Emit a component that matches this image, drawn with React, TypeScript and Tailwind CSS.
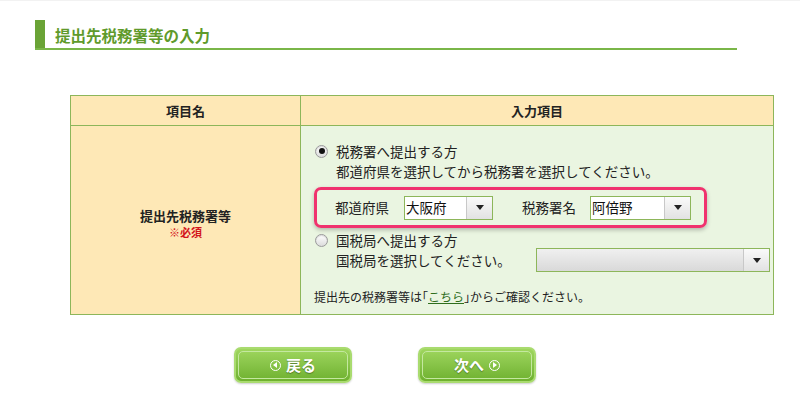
import React from "react";

const jp = { fontFamily: '"Noto Sans CJK JP", "Noto Sans", sans-serif' };

function Radio({ checked }: { checked?: boolean }) {
  return (
    <span className="inline-flex h-[13px] w-[13px] items-center justify-center rounded-full border border-[#9a9a9a] bg-gradient-to-b from-white to-[#dcdcdc] shadow-[inset_0_1px_1px_rgba(0,0,0,0.15)]">
      {checked && <span className="h-[6px] w-[6px] rounded-full bg-[#111]" />}
    </span>
  );
}

function Select({ value, width, gray }: { value: string; width: string; gray?: boolean }) {
  return (
    <div
      className={`flex h-[24px] shrink-0 items-stretch border border-[#8db65a] ${width} ${
        gray ? "bg-gradient-to-b from-[#f0f0f0] to-[#d9d9d9]" : "bg-white"
      }`}
    >
      <span className="flex flex-1 items-center pl-[1px] text-[13.5px] leading-none text-[#111]">{value}</span>
      <span className="flex w-[26px] items-center justify-center border-l border-[#c8c8c8] bg-gradient-to-b from-[#fafafa] to-[#e2e2e2]">
        <span className="h-0 w-0 border-x-[4px] border-t-[5px] border-x-transparent border-t-[#222]" />
      </span>
    </div>
  );
}

function NavButton({ label, dir }: { label: string; dir: "back" | "next" }) {
  const icon = (
    <span className="inline-flex h-[11px] w-[11px] items-center justify-center rounded-full border-[1.5px] border-white">
      <span
        className={`h-0 w-0 border-y-[3px] border-y-transparent ${
          dir === "back" ? "mr-[1px] border-r-[4px] border-r-white" : "ml-[1px] border-l-[4px] border-l-white"
        }`}
      />
    </span>
  );
  return (
    <button className="h-[36px] w-[118px] rounded-[7px] border-2 border-[#a9db6f] bg-gradient-to-b from-[#9fd65e] to-[#6fb12f] p-[2px] shadow-[0_1px_2px_rgba(0,0,0,0.2)]">
      <div className="flex h-full w-full items-center justify-center gap-[5px] rounded-[5px] border border-[#c4e8a0] text-[15px] font-bold text-white [text-shadow:0_1px_1px_rgba(0,0,0,0.35)]">
        {dir === "back" && icon}
        <span>{label}</span>
        {dir === "next" && icon}
      </div>
    </button>
  );
}

export default function App() {
  return (
    <div className="h-[395px] w-[800px] overflow-hidden border-t border-[#f2f2f2] bg-white text-[#222]" style={jp}>
      {/* Heading */}
      <div className="ml-[35px] mt-[19px] flex w-[702px] items-stretch border-b-2 border-[#7ab648]">
        <div className="w-[10px] bg-[#6aa336]" />
        <h2 className="flex h-[28px] items-center pl-[10px] pt-[4px] text-[15.5px] font-bold text-[#5f9a2b]">
          提出先税務署等の入力
        </h2>
      </div>

      {/* Table */}
      <table className="ml-[70px] mt-[45px] w-[704px] table-fixed border-collapse text-[13.5px]">
        <colgroup>
          <col className="w-[230px]" />
          <col />
        </colgroup>
        <thead>
          <tr className="h-[30px] bg-[#fee8b6]">
            <th className="border border-[#8db65a] text-[13px] font-bold">項目名</th>
            <th className="border border-[#8db65a] text-[13px] font-bold">入力項目</th>
          </tr>
        </thead>
        <tbody>
          <tr className="h-[189px]">
            <td className="border border-[#8db65a] bg-[#fee8b6] pt-[8px] text-center align-middle">
              <div className="text-[13px] font-bold leading-[16px]">提出先税務署等</div>
              <div className="text-[11px] font-bold leading-[16px] text-[#d3141b]">※必須</div>
            </td>
            <td className="border border-[#8db65a] bg-[#eaf5e1] pl-[13px] pr-[4px] pt-[15px] pb-[7px] align-top">
              <div className="flex h-[20px] items-center gap-[8px] pl-[1px]">
                <Radio checked />
                <span>税務署へ提出する方</span>
              </div>
              <div className="flex h-[20px] items-center pl-[22px]">都道府県を選択してから税務署を選択してください。</div>

              <div className="mt-[6px] flex h-[41px] w-[393px] items-center rounded-[7px] border-[3px] border-[#f0326e] pl-[18px] shadow-[0_2px_4px_rgba(0,0,0,0.25)]">
                <span className="w-[69px]">都道府県</span>
                <Select value="大阪府" width="w-[89px]" />
                <span className="ml-[29px] w-[68px]">税務署名</span>
                <Select value="阿倍野" width="w-[101px]" />
              </div>

              <div className="mt-[2px] flex h-[20px] items-center gap-[8px] pl-[1px]">
                <Radio />
                <span>国税局へ提出する方</span>
              </div>
              <div className="flex h-[20px] items-center pl-[22px]">
                <span className="w-[200px] shrink-0">国税局を選択してください。</span>
                <Select value="" width="w-[234px]" gray />
              </div>

              <div className="mt-[17px] flex h-[20px] items-center text-[12px] [font-feature-settings:'halt']">
                提出先の税務署等は「
                <a href="#" className="text-[#2f6e1d] underline">
                  こちら
                </a>
                」からご確認ください。
              </div>
            </td>
          </tr>
        </tbody>
      </table>

      {/* Buttons */}
      <div className="ml-[234px] mt-[32px] flex gap-[66px]">
        <NavButton label="戻る" dir="back" />
        <NavButton label="次へ" dir="next" />
      </div>
    </div>
  );
}
